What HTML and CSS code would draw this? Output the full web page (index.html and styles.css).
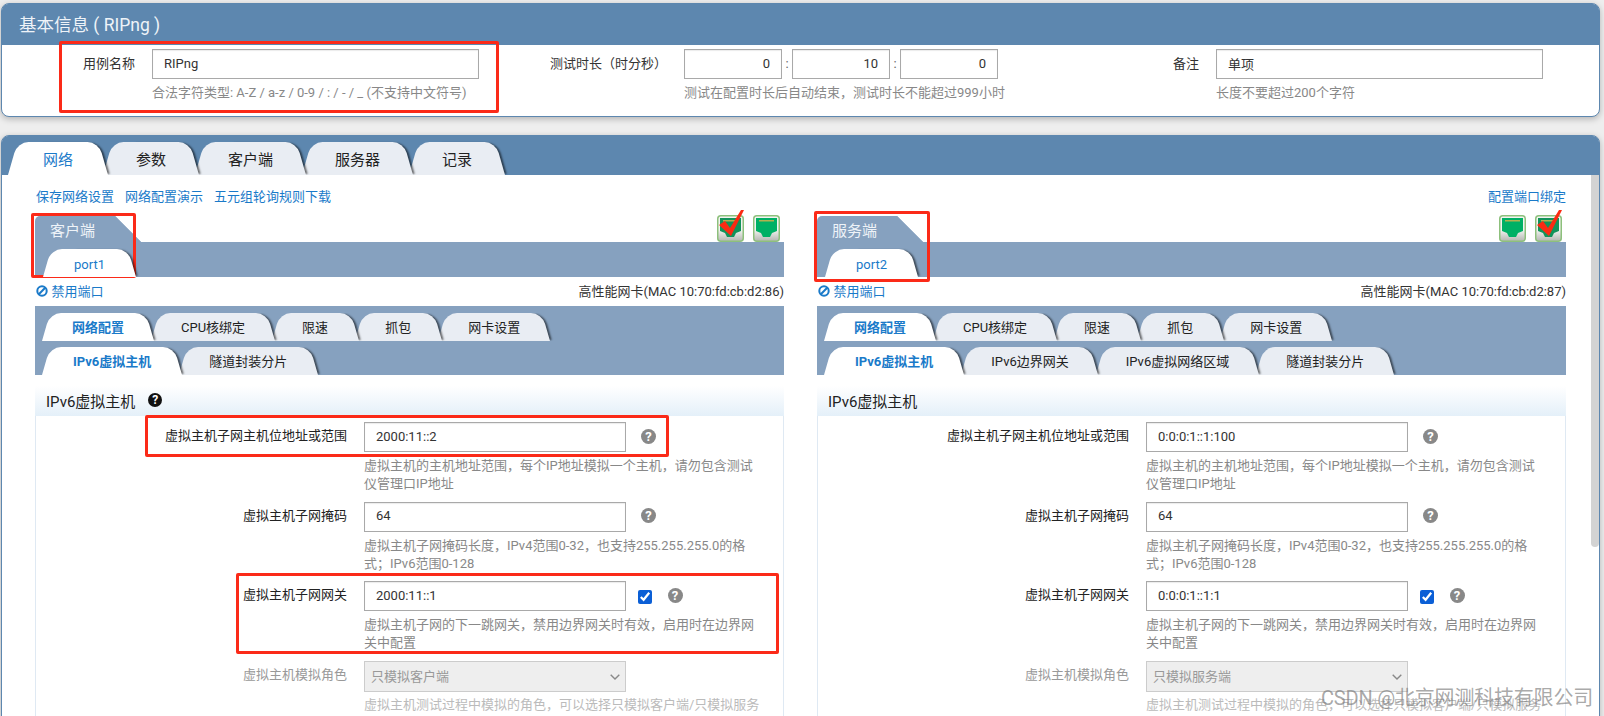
FILE: index.html
```html
<!DOCTYPE html>
<html lang="zh-CN">
<head>
    <meta charset="UTF-8">
    <meta name="viewport" content="width=device-width, initial-scale=1.0">
    <title>基本信息 ( RIPng )</title>
    <link rel="stylesheet" href="styles.css">
</head>
<body>

    <!-- shared icons -->
    <svg class="defs" aria-hidden="true">
        <defs>
            <linearGradient id="plug-base" x1="0" y1="0" x2="0" y2="1">
                <stop offset="0.55" stop-color="#f2f4f0"/>
                <stop offset="1" stop-color="#b4b6b2"/>
            </linearGradient>
        </defs>
        <symbol id="plug" viewBox="0 0 27 32">
            <rect x="0.75" y="5.75" width="25.5" height="25.5" rx="3" fill="url(#plug-base)" stroke="#8dc07c" stroke-width="1.5"/>
            <polygon points="3,8 24,8 24,21 19,23 17,27 10,27 8,23 3,21" fill="#00b065"/>
            <rect x="6" y="10" width="15" height="1.5" fill="#b3b04f"/>
        </symbol>
        <symbol id="plug-on" viewBox="0 0 27 32">
            <rect x="0.75" y="5.75" width="25.5" height="25.5" rx="3" fill="url(#plug-base)" stroke="#8dc07c" stroke-width="1.5"/>
            <polygon points="3,8 24,8 24,21 19,23 17,27 10,27 8,23 3,21" fill="#12935a"/>
            <rect x="6" y="10" width="15" height="1.5" fill="#b3b04f"/>
            <polygon points="2,15 8,11 13,18 24,0 27,0 14,26" fill="#fb2a12"/>
        </symbol>
    </svg>

    <section class="panel info-panel">
        <h2 class="panel-title">基本信息 ( RIPng )</h2>
        <div class="info-grid">
            <label class="info-label">用例名称</label>
            <input class="text-input" type="text" value="RIPng">
            <label class="info-label">测试时长（时分秒）</label>
            <div class="time-fields">
                <input class="text-input num-input" type="text" value="0">
                <span class="colon">:</span>
                <input class="text-input num-input" type="text" value="10">
                <span class="colon">:</span>
                <input class="text-input num-input" type="text" value="0">
            </div>
            <label class="info-label">备注</label>
            <input class="text-input" type="text" value="单项">

            <span></span>
            <p class="hint info-hint">合法字符类型: A-Z / a-z / 0-9 / : / - / _ (不支持中文符号)</p>
            <span></span>
            <p class="hint info-hint">测试在配置时长后自动结束，测试时长不能超过999小时</p>
            <span></span>
            <p class="hint info-hint">长度不要超过200个字符</p>
        </div>
    </section>

    <section class="panel main-panel">
        <div class="main-tabs tab-bar">
            <a class="tab active">网络</a>
            <a class="tab">参数</a>
            <a class="tab">客户端</a>
            <a class="tab">服务器</a>
            <a class="tab">记录</a>
        </div>

        <div class="main-body">
            <div class="link-row">
                <div class="link-group">
                    <a class="link">保存网络设置</a>
                    <a class="link">网络配置演示</a>
                    <a class="link">五元组轮询规则下载</a>
                </div>
                <a class="link">配置端口绑定</a>
            </div>

            <div class="columns">
                <!-- client side -->
                <div class="column">
                    <div class="port-top">
                        <div class="flag">客户端</div>
                        <div class="port-icons">
                            <svg class="port-icon"><use href="#plug-on"/></svg>
                            <svg class="port-icon"><use href="#plug"/></svg>
                        </div>
                    </div>
                    <div class="port-strip tab-bar">
                        <a class="tab active">port1</a>
                    </div>
                    <div class="port-info">
                        <a class="link disable-link">
                            <svg class="ban-icon" viewBox="0 0 12 12"><circle cx="6" cy="6" r="4.7" fill="none" stroke="currentColor" stroke-width="2"/><line x1="2.8" y1="9.2" x2="9.2" y2="2.8" stroke="currentColor" stroke-width="2"/></svg>
                            禁用端口
                        </a>
                        <span class="nic">高性能网卡(MAC 10:70:fd:cb:d2:86)</span>
                    </div>
                    <div class="sub-strip">
                        <div class="sub-tabs tab-bar">
                            <a class="tab active">网络配置</a>
                            <a class="tab">CPU核绑定</a>
                            <a class="tab">限速</a>
                            <a class="tab">抓包</a>
                            <a class="tab">网卡设置</a>
                        </div>
                        <div class="sub-tabs tab-bar">
                            <a class="tab active">IPv6虚拟主机</a>
                            <a class="tab">隧道封装分片</a>
                        </div>
                    </div>
                    <div class="fieldset">
                        <div class="fieldset-head">IPv6虚拟主机 <span class="help help-dark">?</span></div>
                        <div class="form-row">
                            <label class="form-label">虚拟主机子网主机位地址或范围</label>
                            <div class="form-field">
                                <div class="control-line">
                                    <input class="text-input wide-input" type="text" value="2000:11::2">
                                    <span class="help">?</span>
                                </div>
                                <p class="hint">虚拟主机的主机地址范围，每个IP地址模拟一个主机，请勿包含测试仪管理口IP地址</p>
                            </div>
                        </div>
                        <div class="form-row">
                            <label class="form-label">虚拟主机子网掩码</label>
                            <div class="form-field">
                                <div class="control-line">
                                    <input class="text-input wide-input" type="text" value="64">
                                    <span class="help">?</span>
                                </div>
                                <p class="hint">虚拟主机子网掩码长度，IPv4范围0-32，也支持255.255.255.0的格式；IPv6范围0-128</p>
                            </div>
                        </div>
                        <div class="form-row">
                            <label class="form-label">虚拟主机子网网关</label>
                            <div class="form-field">
                                <div class="control-line">
                                    <input class="text-input wide-input" type="text" value="2000:11::1">
                                    <input class="check" type="checkbox" checked>
                                    <span class="help">?</span>
                                </div>
                                <p class="hint">虚拟主机子网的下一跳网关，禁用边界网关时有效，启用时在边界网关中配置</p>
                            </div>
                        </div>
                        <div class="form-row row-disabled">
                            <label class="form-label">虚拟主机模拟角色</label>
                            <div class="form-field">
                                <div class="control-line">
                                    <select class="select-input" disabled><option>只模拟客户端</option></select>
                                    <svg class="chevron" viewBox="0 0 10 6"><polyline points="0.7,0.7 5,5 9.3,0.7" fill="none" stroke="#888" stroke-width="1.4"/></svg>
                                </div>
                                <p class="hint">虚拟主机测试过程中模拟的角色，可以选择只模拟客户端/只模拟服务端，或者同时模拟两端</p>
                            </div>
                        </div>
                    </div>
                </div>

                <!-- server side -->
                <div class="column">
                    <div class="port-top">
                        <div class="flag">服务端</div>
                        <div class="port-icons">
                            <svg class="port-icon"><use href="#plug"/></svg>
                            <svg class="port-icon"><use href="#plug-on"/></svg>
                        </div>
                    </div>
                    <div class="port-strip tab-bar">
                        <a class="tab active">port2</a>
                    </div>
                    <div class="port-info">
                        <a class="link disable-link">
                            <svg class="ban-icon" viewBox="0 0 12 12"><circle cx="6" cy="6" r="4.7" fill="none" stroke="currentColor" stroke-width="2"/><line x1="2.8" y1="9.2" x2="9.2" y2="2.8" stroke="currentColor" stroke-width="2"/></svg>
                            禁用端口
                        </a>
                        <span class="nic">高性能网卡(MAC 10:70:fd:cb:d2:87)</span>
                    </div>
                    <div class="sub-strip">
                        <div class="sub-tabs tab-bar">
                            <a class="tab active">网络配置</a>
                            <a class="tab">CPU核绑定</a>
                            <a class="tab">限速</a>
                            <a class="tab">抓包</a>
                            <a class="tab">网卡设置</a>
                        </div>
                        <div class="sub-tabs tab-bar">
                            <a class="tab active">IPv6虚拟主机</a>
                            <a class="tab">IPv6边界网关</a>
                            <a class="tab">IPv6虚拟网络区域</a>
                            <a class="tab">隧道封装分片</a>
                        </div>
                    </div>
                    <div class="fieldset">
                        <div class="fieldset-head">IPv6虚拟主机</div>
                        <div class="form-row">
                            <label class="form-label">虚拟主机子网主机位地址或范围</label>
                            <div class="form-field">
                                <div class="control-line">
                                    <input class="text-input wide-input" type="text" value="0:0:0:1::1:100">
                                    <span class="help">?</span>
                                </div>
                                <p class="hint">虚拟主机的主机地址范围，每个IP地址模拟一个主机，请勿包含测试仪管理口IP地址</p>
                            </div>
                        </div>
                        <div class="form-row">
                            <label class="form-label">虚拟主机子网掩码</label>
                            <div class="form-field">
                                <div class="control-line">
                                    <input class="text-input wide-input" type="text" value="64">
                                    <span class="help">?</span>
                                </div>
                                <p class="hint">虚拟主机子网掩码长度，IPv4范围0-32，也支持255.255.255.0的格式；IPv6范围0-128</p>
                            </div>
                        </div>
                        <div class="form-row">
                            <label class="form-label">虚拟主机子网网关</label>
                            <div class="form-field">
                                <div class="control-line">
                                    <input class="text-input wide-input" type="text" value="0:0:0:1::1:1">
                                    <input class="check" type="checkbox" checked>
                                    <span class="help">?</span>
                                </div>
                                <p class="hint">虚拟主机子网的下一跳网关，禁用边界网关时有效，启用时在边界网关中配置</p>
                            </div>
                        </div>
                        <div class="form-row row-disabled">
                            <label class="form-label">虚拟主机模拟角色</label>
                            <div class="form-field">
                                <div class="control-line">
                                    <select class="select-input" disabled><option>只模拟服务端</option></select>
                                    <svg class="chevron" viewBox="0 0 10 6"><polyline points="0.7,0.7 5,5 9.3,0.7" fill="none" stroke="#888" stroke-width="1.4"/></svg>
                                </div>
                                <p class="hint">虚拟主机测试过程中模拟的角色，可以选择只模拟客户端/只模拟服务端，或者同时模拟两端</p>
                            </div>
                        </div>
                    </div>
                </div>
            </div>
        </div>

        <div class="scroll-thumb"></div>
    </section>

    <!-- red review marks drawn on top of the page -->
    <div class="mark mark-name"></div>
    <div class="mark mark-client"></div>
    <div class="mark mark-server"></div>
    <div class="mark mark-host"></div>
    <div class="mark mark-gateway"></div>

    <div class="watermark">CSDN @北京网测科技有限公司</div>

</body>
</html>
```

FILE: styles.css
```css
/* page */
* {
    box-sizing: border-box;
}

body {
    margin: 0;
    padding: 3px 4px 0 1px;
    height: 716px;
    overflow: hidden;
    position: relative;
    background-color: #eeeeee;
    color: #333;
    font-family: Roboto, "Noto Sans CJK SC", sans-serif;
    font-size: 13px;
}

.defs {
    position: absolute;
    width: 0;
    height: 0;
}

/* panels */
.panel {
    position: relative;
    background-color: white;
    border: 1px solid #5d87af;
    border-radius: 8px;
    box-shadow: 0 2px 6px rgba(0, 0, 0, 0.25);
}

.info-panel {
    height: 114px;
}

.main-panel {
    height: 700px;
    margin-top: 18px;
}

.panel-title {
    margin: 0;
    height: 41px;
    padding-left: 17px;
    background-color: #5d87af;
    border-radius: 6px 6px 0 0;
    color: #eef3f8;
    font-size: 17.5px;
    font-weight: normal;
    line-height: 42px;
}

/* top form */
.info-grid {
    display: grid;
    grid-template-columns: 150px 327px 205px 314px 218px 327px;
    padding-top: 4px;
}

.info-label {
    padding-right: 17px;
    text-align: right;
    line-height: 30px;
}

.time-fields {
    display: flex;
}

.colon {
    width: 10px;
    color: #666;
    text-align: center;
    line-height: 30px;
}

.num-input {
    flex: 1;
    min-width: 0;
    text-align: right;
}

.text-input {
    height: 30px;
    padding: 0 11px 2px;
    border: 1px solid #a9a9a9;
    box-shadow: inset 0 1px 1px rgba(0, 0, 0, 0.08);
    background-color: white;
    color: #333;
    font-family: inherit;
    font-size: 13px;
    outline: none;
}

.hint {
    margin: 5px 0 0;
    color: #888;
    line-height: 18px;
}

.info-hint {
    white-space: nowrap;
}

/* tabs */
.tab-bar {
    display: flex;
    overflow: hidden;
}

.tab {
    position: relative;
    z-index: 1;
    display: block;
    color: #222;
    text-align: center;
    white-space: nowrap;
}

.tab::before,
.tab::after {
    content: "";
    position: absolute;
    top: 0;
    bottom: 0;
    z-index: -1;
    width: 60%;
    background-color: #e9edf3;
}

.tab::before {
    left: 0;
    border-radius: 11px 0 0 0;
    transform: skewX(-16deg);
    transform-origin: bottom left;
}

.tab::after {
    right: 0;
    border-radius: 0 11px 0 0;
    box-shadow: 3px 0 2px -1px rgba(0, 0, 0, 0.55);
    transform: skewX(16deg);
    transform-origin: bottom right;
}

.tab.active {
    color: #1a7ac9;
}

.tab.active::before,
.tab.active::after {
    background-color: white;
}

.tab:nth-child(1) { z-index: 5; }
.tab:nth-child(2) { z-index: 4; }
.tab:nth-child(3) { z-index: 3; }
.tab:nth-child(4) { z-index: 2; }
.tab:nth-child(5) { z-index: 1; }

.main-tabs {
    height: 39px;
    padding: 6px 0 0 6px;
    background-color: #5d87af;
    border-radius: 6px 6px 0 0;
}

.main-tabs .tab {
    margin-right: -4px;
    padding: 0 33px;
    font-size: 15px;
    line-height: 36px;
}

.main-tabs .tab.active {
    margin-right: -5px;
    padding: 0 35px;
}

.sub-strip {
    height: 69px;
    padding-top: 7px;
    background-color: #86a1bf;
}

.sub-tabs {
    height: 28px;
    padding-left: 7px;
}

.sub-tabs + .sub-tabs {
    margin-top: 6px;
}

.sub-tabs .tab {
    margin-right: -3px;
    padding: 0 30px;
    line-height: 30px;
}

.sub-tabs .tab.active {
    font-weight: bold;
}

.sub-tabs + .sub-tabs .tab.active {
    padding: 0 31px;
}

/* network tab */
.main-body {
    padding: 13px 33px 0;
}

.link-row {
    display: flex;
    justify-content: space-between;
    line-height: 18px;
}

.link-group {
    display: flex;
    gap: 11px;
    padding-left: 1px;
}

.link {
    color: #1a7ac9;
}

.columns {
    display: grid;
    grid-template-columns: 749px 749px;
    column-gap: 33px;
    margin-top: 10px;
}

.port-top {
    display: flex;
    justify-content: space-between;
    align-items: flex-end;
    height: 26px;
}

.flag {
    width: 106px;
    height: 26px;
    padding-left: 15px;
    border-top-left-radius: 5px;
    background: linear-gradient(225deg, transparent 18px, #86a1bf 18.5px);
    color: #eef3f8;
    font-size: 15px;
    line-height: 30px;
}

.port-icons {
    display: flex;
    gap: 9px;
    padding-right: 4px;
}

.port-icon {
    display: block;
    width: 27px;
    height: 32px;
    overflow: visible;
}

.port-strip {
    align-items: flex-end;
    height: 35px;
    padding-left: 8px;
    background-color: #86a1bf;
}

.port-strip .tab {
    height: 28px;
    padding: 0 31px;
    line-height: 32px;
}

.port-info {
    display: flex;
    justify-content: space-between;
    align-items: center;
    height: 29px;
    padding-bottom: 2px;
}

.disable-link {
    display: flex;
    align-items: center;
    gap: 4px;
    padding-left: 0.5px;
}

.ban-icon {
    width: 12px;
    height: 12px;
}

/* host form */
.fieldset {
    margin-top: 11px;
    border: solid #dfe9f3;
    border-width: 0 1px;
}

.fieldset-head {
    display: flex;
    align-items: center;
    gap: 13px;
    height: 30px;
    margin: 0 -1px 6px;
    padding: 0 0 2px 11px;
    background: linear-gradient(#ffffff, #e4f0f9);
    color: #222;
    font-size: 15px;
}

.form-row {
    display: flex;
    gap: 17px;
    padding-bottom: 8.5px;
}

.form-label {
    width: 311px;
    color: #222;
    text-align: right;
    line-height: 28px;
}

.form-field {
    width: 400px;
}

.control-line {
    position: relative;
    display: flex;
    align-items: center;
    height: 30px;
}

.wide-input {
    width: 262px;
    flex-shrink: 0;
}

.help {
    width: 15px;
    height: 15px;
    margin: -2px 0 0 15px;
    border-radius: 50%;
    background-color: #888;
    color: white;
    font-size: 13px;
    font-weight: bold;
    text-align: center;
    line-height: 15px;
}

.help-dark {
    width: 14px;
    height: 14px;
    margin: 0;
    background-color: #111;
    font-size: 12px;
    line-height: 14px;
}

.check {
    width: 14px;
    height: 14px;
    margin: 2px 0 0 11.5px;
    accent-color: #0b5fd6;
}

.check + .help {
    margin-left: 16px;
}

.select-input {
    appearance: none;
    width: 262px;
    height: 31px;
    margin-top: 1px;
    padding: 0 6px;
    border: 1px solid #cccccc;
    border-radius: 0;
    background-color: #eeeeee;
    color: #999;
    font-family: inherit;
    font-size: 13px;
    opacity: 1;
}

.chevron {
    position: absolute;
    left: 246px;
    top: 13px;
    width: 10px;
    height: 6px;
}

.row-disabled .form-label {
    color: #999;
}

.row-disabled .hint {
    color: #bbb;
}

.scroll-thumb {
    position: absolute;
    top: 39px;
    right: 0;
    width: 8px;
    height: 372px;
    border-radius: 0 0 4px 4px;
    background-color: #d3d3d3;
}

/* annotations on top of the screenshot */
.mark {
    position: absolute;
    border: 3px solid #fb2a18;
    border-radius: 2px;
}

.mark-name {
    left: 59px;
    top: 41px;
    width: 440px;
    height: 72px;
}

.mark-client {
    left: 31px;
    top: 213px;
    width: 105px;
    height: 65px;
}

.mark-server {
    left: 814px;
    top: 211px;
    width: 116px;
    height: 71px;
}

.mark-host {
    left: 145px;
    top: 415px;
    width: 524px;
    height: 42px;
}

.mark-gateway {
    left: 236px;
    top: 573px;
    width: 543px;
    height: 81px;
}

.watermark {
    position: absolute;
    left: 1321px;
    top: 684px;
    color: rgba(120, 120, 120, 0.65);
    font-size: 20px;
    letter-spacing: -0.2px;
    line-height: 28px;
    white-space: nowrap;
}
```
